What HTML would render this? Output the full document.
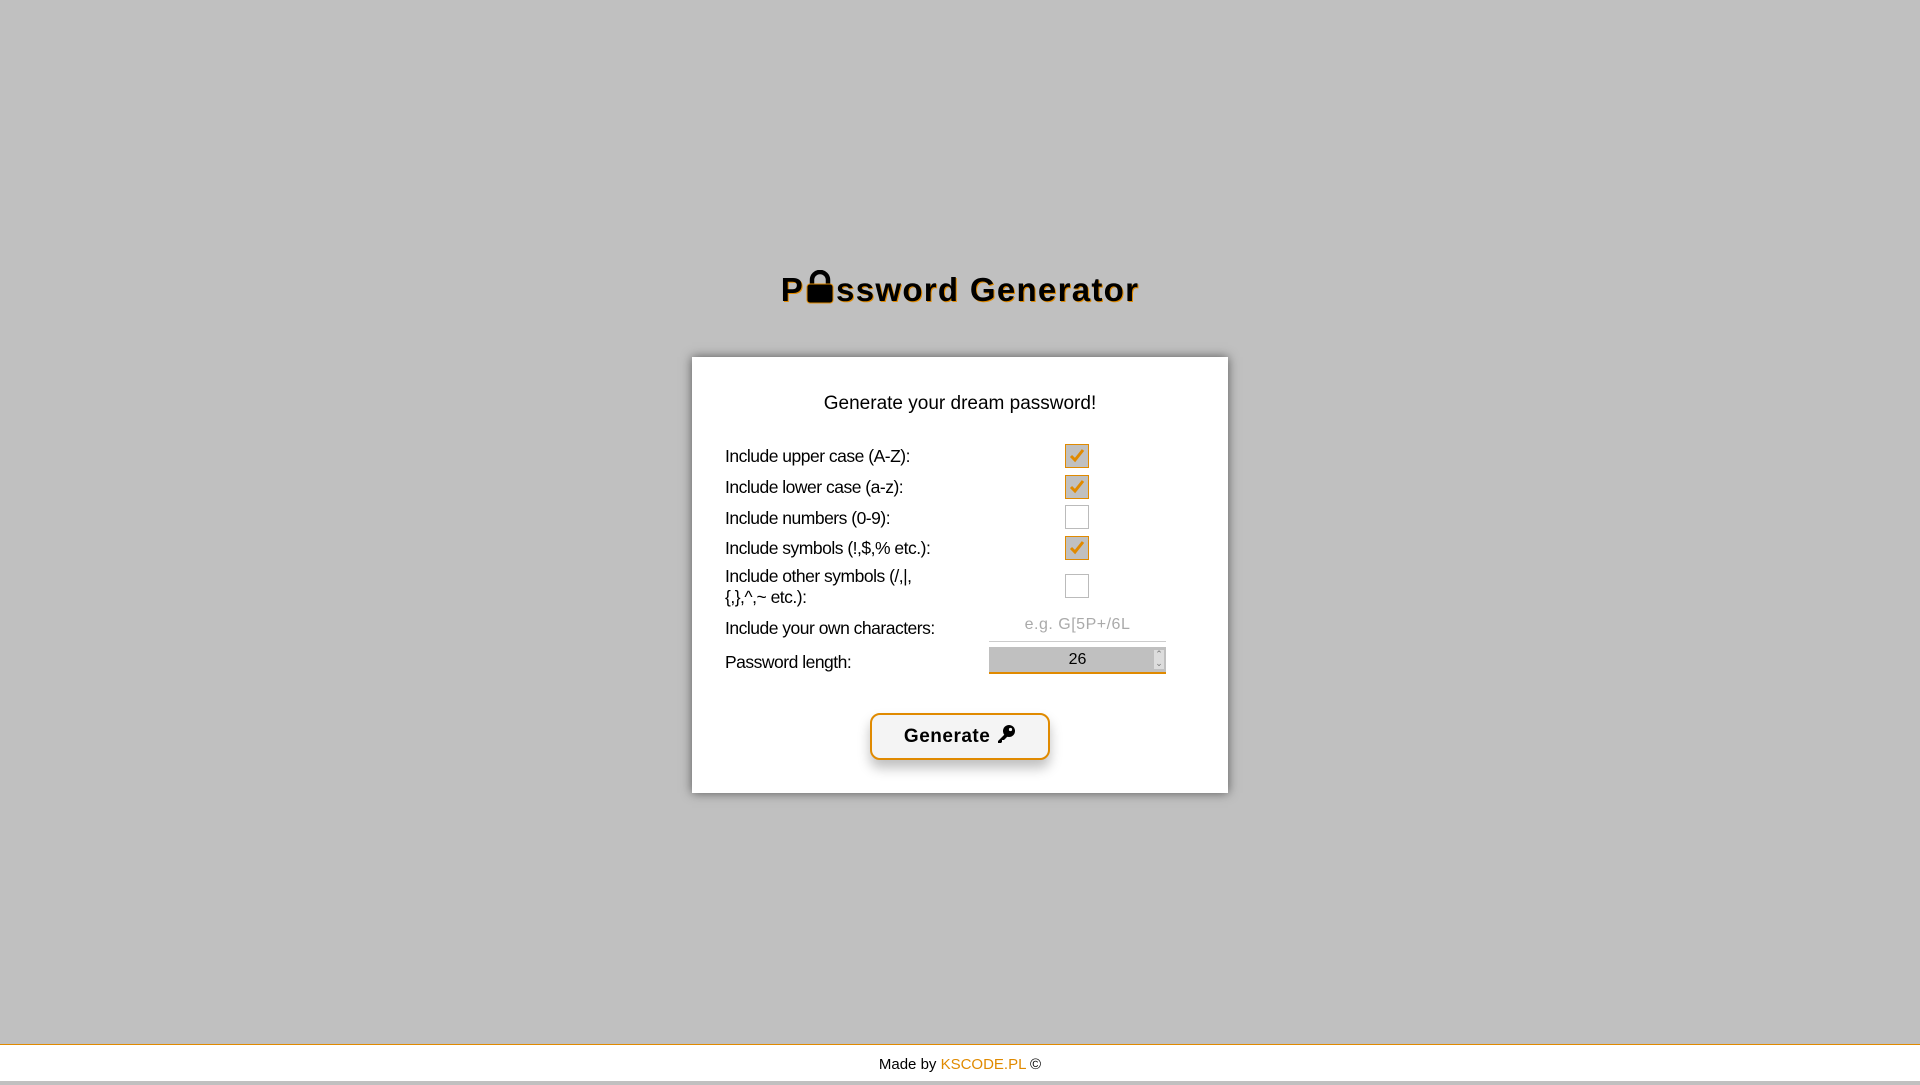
<!DOCTYPE html>
<html><head><meta charset="utf-8"><style>
body{margin:0;width:1920px;height:1080px;background:#c0c0c0;font-family:"Liberation Sans",sans-serif;position:relative;overflow:hidden}
.title{position:absolute;top:270px;left:0;width:1920px;text-align:center;font-size:33px;font-weight:bold;letter-spacing:1.3px;color:#000;text-shadow:1px 1px 0 #e08a00}
.card{position:absolute;left:692px;top:357px;width:536px;height:436px;background:#fff;box-shadow:0 0 10px rgba(0,0,0,.55)}
.sub{position:absolute;top:36px;left:0;width:100%;text-align:center;font-size:19px}
.lbl{position:absolute;left:33px;font-size:17.5px;letter-spacing:-.5px;line-height:21px}
.cb{position:absolute;left:373px;width:24px;height:24px;border:1px solid #bbb;box-sizing:border-box;background:#fff}
.cb.on{background:#c0c0c0;border:1.5px solid #e08a00}
.cb.on svg{position:absolute;left:3px;top:3px}
.inp{position:absolute;left:297px;width:177px;box-sizing:border-box;text-align:center;font-size:16px}
.btn{position:absolute;left:178px;top:356px;width:180px;height:47px;box-sizing:border-box;border:2px solid #e08a00;border-radius:10px;background:#f4f4f4;box-shadow:0 8px 12px rgba(0,0,0,.25);font-size:19px;font-weight:bold;letter-spacing:.5px;text-align:center;line-height:43px}
.foot{position:absolute;left:0;top:1044px;width:1920px;height:36px;background:#fff;border-top:1.5px solid #e08a00;text-align:center;font-size:15px;line-height:38px}
</style></head><body>
<div class="title">P<svg width="30" height="34" viewBox="0 0 30 34" style="vertical-align:-3px;margin:0 1px"><path d="M7 15V10a8 8 0 0 1 16 0v5" fill="none" stroke="#000" stroke-width="4.5"/><rect x="2" y="14" width="26" height="19" rx="3" fill="#000" stroke="#e08a00" stroke-width="1"/></svg>ssword Generator</div>
<div class="card">
<div class="sub">Generate your dream password!</div>
<div class="lbl" style="top:89px">Include upper case (A-Z):</div>
<div class="lbl" style="top:120px">Include lower case (a-z):</div>
<div class="lbl" style="top:151px">Include numbers (0-9):</div>
<div class="lbl" style="top:181px">Include symbols (!,$,% etc.):</div>
<div class="lbl" style="top:209px">Include other symbols (/,|,<br>{,},^,~ etc.):</div>
<div class="lbl" style="top:261px">Include your own characters:</div>
<div class="lbl" style="top:295px">Password length:</div>
<div class="cb on" style="top:87px"><svg width="16" height="16" viewBox="0 0 16 16"><path d="M2 8l4 4 8-10" fill="none" stroke="#e08a00" stroke-width="3"/></svg></div>
<div class="cb on" style="top:118px"><svg width="16" height="16" viewBox="0 0 16 16"><path d="M2 8l4 4 8-10" fill="none" stroke="#e08a00" stroke-width="3"/></svg></div>
<div class="cb" style="top:148px"></div>
<div class="cb on" style="top:179px"><svg width="16" height="16" viewBox="0 0 16 16"><path d="M2 8l4 4 8-10" fill="none" stroke="#e08a00" stroke-width="3"/></svg></div>
<div class="cb" style="top:217px"></div>
<div class="inp" style="top:259px;height:26px;border-bottom:1.5px solid #ccc;color:#aaa;letter-spacing:.5px">e.g. G[5P+/6L</div>
<div class="inp" style="top:290px;height:27px;background:#c0c0c0;border-bottom:2px solid #e08a00;line-height:25px">26<span style="position:absolute;right:2px;top:3px;width:10px;height:19px;background:#ddd;font-size:9px;line-height:9px;color:#777">⌃<br>⌄</span></div>
<div class="btn">Generate <svg width="20" height="20" viewBox="0 0 20 20" style="vertical-align:-2px"><circle cx="13" cy="7" r="6" fill="#000"/><circle cx="14.5" cy="5.5" r="1.6" fill="#f4f4f4"/><path d="M9 10L2 17v2h3l1-1v-2h2l4-4" fill="#000"/></svg></div>
</div>
<div class="foot" style="line-height:40px">Made by <span style="color:#e08a00">KSCODE.PL</span> ©</div>
</body></html>
